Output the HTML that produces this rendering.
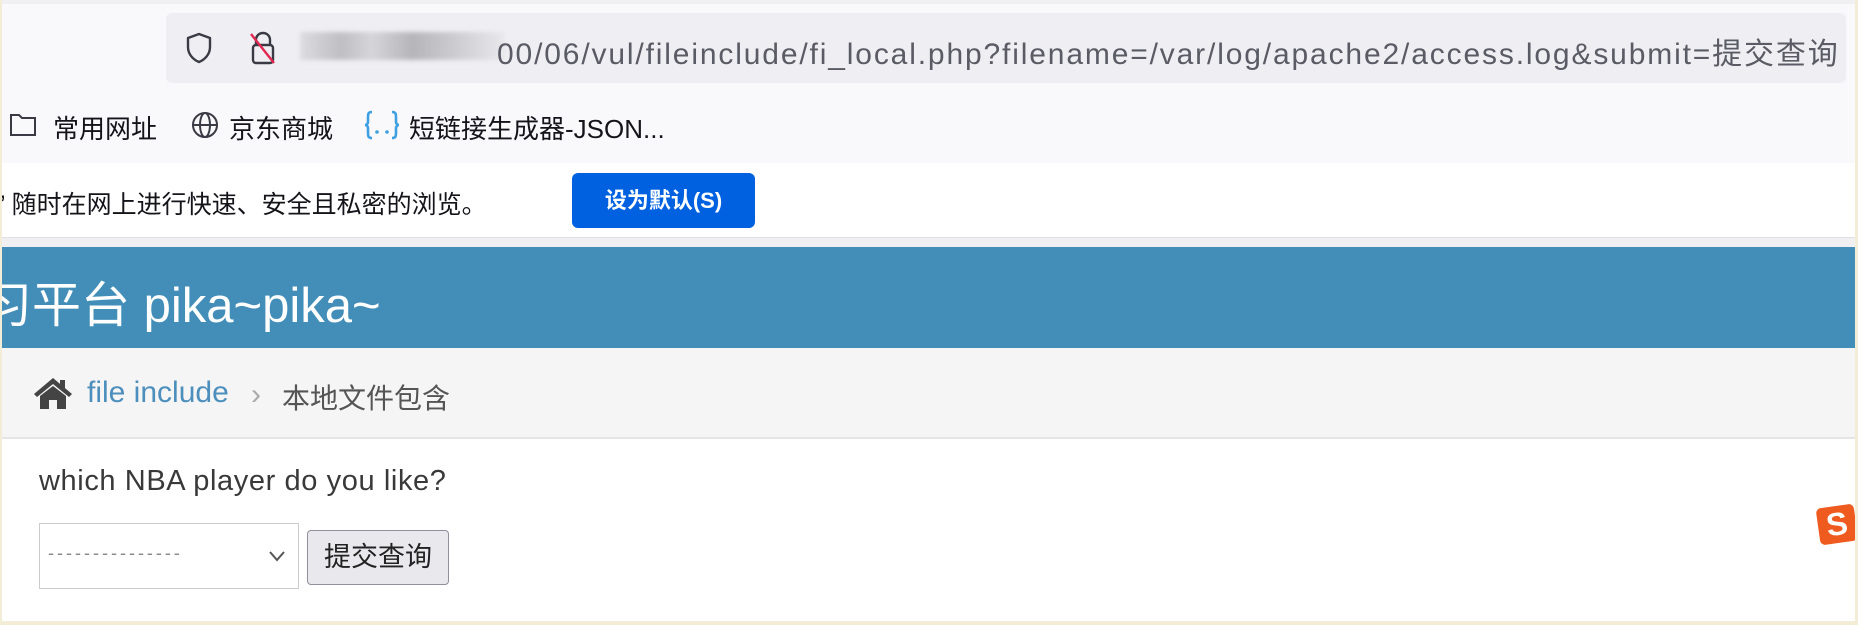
<!DOCTYPE html>
<html><head><meta charset="utf-8"><style>
*{margin:0;padding:0;box-sizing:border-box}
html,body{width:1858px;height:625px;overflow:hidden;background:#fff;font-family:"Liberation Sans","Noto Sans CJK SC",sans-serif}
.abs{position:absolute}
</style></head><body>
<div class="abs" style="left:0;top:0;width:1858px;height:163px;background:#f9f9fb"></div>
<div class="abs" style="left:0;top:0;width:1858px;height:4px;background:#f0f0f2"></div>
<div class="abs" style="left:166px;top:13px;width:1680px;height:70px;background:#efeff3;border-radius:6px"></div>
<svg class="abs" style="left:185px;top:32px" width="28" height="32" viewBox="0 0 28 32"><path d="M14 2 L25 6 V15 C25 23 19 28 14 30 C9 28 3 23 3 15 V6 Z" fill="none" stroke="#3a3a44" stroke-width="2.4" stroke-linejoin="round"/></svg>
<svg class="abs" style="left:247px;top:30px" width="32" height="36" viewBox="0 0 32 36"><path d="M9 15 V10 C9 6 12 3 16 3 C20 3 23 6 23 10 V15" fill="none" stroke="#3a3a44" stroke-width="2.4"/><rect x="6" y="15" width="20" height="18" rx="3" fill="none" stroke="#3a3a44" stroke-width="2.4"/><line x1="4" y1="4" x2="27" y2="33" stroke="#e22850" stroke-width="2.4"/></svg>
<div class="abs" style="left:300px;top:32px;width:205px;height:28px;background:linear-gradient(90deg,#d8d8dc,#b4b4b8 20%,#d0d0d4 35%,#a8a8ac 55%,#c4c4c8 75%,#e8e8ec);filter:blur(2px);opacity:.8"></div>
<div class="abs" style="left:497px;top:29px;font-size:30px;color:#5b5b66;white-space:nowrap;letter-spacing:1.85px">00/06/vul/fileinclude/fi_local.php?filename=/var/log/apache2/access.log&amp;submit=提交查询</div>
<svg class="abs" style="left:9px;top:111px" width="28" height="26" viewBox="0 0 28 26"><path d="M2 4 H10 L13 7 H26 V24 H2 Z" fill="none" stroke="#3a3a44" stroke-width="2"/></svg>
<div class="abs" style="left:53px;top:109px;font-size:26px;color:#15141a">常用网址</div>
<svg class="abs" style="left:190px;top:110px" width="30" height="30" viewBox="0 0 30 30"><circle cx="15" cy="15" r="12" fill="none" stroke="#3a3a44" stroke-width="2"/><ellipse cx="15" cy="15" rx="5" ry="12" fill="none" stroke="#3a3a44" stroke-width="2"/><line x1="3" y1="15" x2="27" y2="15" stroke="#3a3a44" stroke-width="2"/></svg>
<div class="abs" style="left:229px;top:109px;font-size:26px;color:#15141a">京东商城</div>
<svg class="abs" style="left:363px;top:110px" width="38" height="30" viewBox="0 0 38 30"><path d="M9 2 C5 2 5 4 5 8 V12 C5 14 3 15 2 15 C3 15 5 16 5 18 V22 C5 26 5 28 9 28" fill="none" stroke="#3ea0e0" stroke-width="2.6"/><path d="M29 2 C33 2 33 4 33 8 V12 C33 14 35 15 36 15 C35 15 33 16 33 18 V22 C33 26 33 28 29 28" fill="none" stroke="#3ea0e0" stroke-width="2.6"/><circle cx="14" cy="22" r="1.8" fill="#3ea0e0"/><circle cx="24" cy="22" r="1.8" fill="#3ea0e0"/></svg>
<div class="abs" style="left:409px;top:109px;font-size:26px;color:#15141a;white-space:nowrap">短链接生成器-JSON...</div>
<div class="abs" style="left:0;top:163px;width:1858px;height:74px;background:#fff"></div>
<div class="abs" style="left:0;top:185px;font-size:25px;color:#15141a;white-space:nowrap">’ 随时在网上进行快速、安全且私密的浏览。</div>
<div class="abs" style="left:572px;top:173px;width:183px;height:55px;background:#0061e0;border-radius:6px;color:#fff;font-weight:bold;font-size:22px;text-align:center;line-height:55px">设为默认(S)</div>
<div class="abs" style="left:0;top:237px;width:1858px;height:10px;background:#f0f0f2;border-top:1px solid #e0e0e4"></div>
<div class="abs" style="left:0;top:247px;width:1858px;height:101px;background:#438eb9"></div>
<div class="abs" style="left:-17px;top:266px;font-size:49px;color:#fff;white-space:nowrap">习平台 pika~pika~</div>
<div class="abs" style="left:0;top:348px;width:1858px;height:91px;background:#f5f5f5;border-bottom:2px solid #e5e5e5"></div>
<svg class="abs" style="left:32px;top:376px" width="42" height="34" viewBox="0 0 42 34"><path d="M21 2 L40 18 L37 21 L21 8 L5 21 L2 18 Z" fill="#444"/><rect x="28" y="4" width="5" height="9" fill="#444"/><path d="M8 20 L21 10 L34 20 V33 H25 V24 H17 V33 H8 Z" fill="#444"/></svg>
<div class="abs" style="left:87px;top:376px;font-size:30px;color:#4c8fbd;white-space:nowrap">file include</div>
<div class="abs" style="left:251px;top:378px;font-size:30px;color:#aaa">›</div>
<div class="abs" style="left:282px;top:377px;font-size:28px;color:#555;white-space:nowrap">本地文件包含</div>
<div class="abs" style="left:39px;top:465px;font-size:29px;color:#393939;white-space:nowrap;letter-spacing:0.6px">which NBA player do you like?</div>
<div class="abs" style="left:39px;top:523px;width:260px;height:66px;border:1px solid #ccc;background:#fff"></div>
<div class="abs" style="left:48px;top:543px;font-size:18px;color:#888;letter-spacing:3px">---------------</div>
<svg class="abs" style="left:268px;top:550px" width="18" height="12" viewBox="0 0 18 12"><path d="M2 2 L9 10 L16 2" fill="none" stroke="#555" stroke-width="2"/></svg>
<div class="abs" style="left:307px;top:530px;width:142px;height:55px;background:#e9e9ed;border:1px solid #8f8f9d;border-radius:4px;font-size:27px;color:#222;text-align:center;line-height:53px">提交查询</div>
<div class="abs" style="left:1818px;top:506px;width:38px;height:37px;background:#ef5a1f;border-radius:5px;transform:rotate(-8deg);color:#fff;font-weight:bold;font-size:32px;line-height:37px;text-align:center">S</div>
<div class="abs" style="left:1855px;top:0;width:3px;height:625px;background:#f3ecd6"></div>
<div class="abs" style="left:0;top:0;width:2px;height:625px;background:#f3ecd6"></div>
<div class="abs" style="left:0;top:621px;width:1858px;height:4px;background:#f3ecd6"></div>
</body></html>
